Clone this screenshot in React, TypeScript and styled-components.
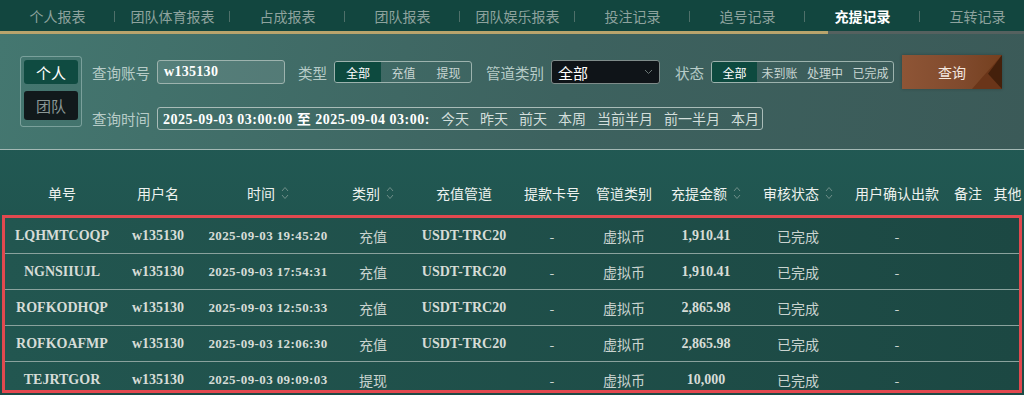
import React from 'react';
import styled, { createGlobalStyle } from 'styled-components';

const GlobalStyle = createGlobalStyle`
  html, body {
    margin: 0;
    padding: 0;
    background: #1f4f4a;
  }
  * {
    box-sizing: border-box;
  }
`;

const sans = `'Noto Sans CJK SC', 'Noto Sans', sans-serif`;
const serif = `'Liberation Serif', 'Noto Sans CJK SC', serif`;

const Page = styled.div`
  width: 1024px;
  height: 395px;
  overflow: hidden;
  font-family: ${sans};
  background: linear-gradient(180deg, #24605a 0%, #1d4c47 100%);
`;

const TabBar = styled.div`
  background: #12463f;
`;

const TabList = styled.div`
  display: flex;
  height: 31px;
`;

const Tab = styled.div<{ $active?: boolean }>`
  position: relative;
  flex: 0 0 115px;
  display: flex;
  align-items: center;
  justify-content: center;
  font-size: 14px;
  color: ${(p) => (p.$active ? '#ffffff' : '#8ea39e')};
  font-weight: ${(p) => (p.$active ? 700 : 400)};
  &:not(:last-child)::after {
    content: '';
    position: absolute;
    right: 0;
    top: 11px;
    width: 1px;
    height: 11px;
    background: #4f706a;
  }
`;

const Track = styled.div`
  height: 3px;
  background: #55615f;
`;

const TrackFill = styled.div`
  width: 828px;
  height: 100%;
  background: #b9a46c;
`;

const Filter = styled.div`
  display: flex;
  align-items: flex-start;
  height: 116px;
  padding: 22px 0 0 20px;
  background: linear-gradient(100deg, #447770 0%, #3d625f 55%, #3b5a58 100%);
  border-bottom: 1px solid #a3b8b4;
`;

const Toggle = styled.div`
  width: 62px;
  height: 71px;
  padding: 3px;
  border: 1px solid rgba(190, 215, 210, 0.45);
  border-radius: 3px;
  display: flex;
  flex-direction: column;
  gap: 7px;
`;

const ToggleBtn = styled.div<{ $active?: boolean }>`
  height: ${(p) => (p.$active ? '24px' : '29px')};
  border-radius: 3px;
  display: flex;
  align-items: center;
  justify-content: center;
  font-size: 15px;
  color: ${(p) => (p.$active ? '#ffffff' : '#8b9896')};
  background: ${(p) => (p.$active ? '#0f4b41' : '#11191b')};
`;

const Form = styled.div`
  margin-left: 10px;
  padding-top: 4px;
  display: flex;
  flex-direction: column;
  gap: 22px;
`;

const FormRow = styled.div`
  display: flex;
  align-items: center;
  height: 24px;
`;

const Label = styled.span<{ $gap?: number }>`
  font-size: 14.5px;
  color: #b7ccc8;
  margin-left: ${(p) => p.$gap ?? 0}px;
  margin-right: 7px;
  white-space: nowrap;
`;

const TextInput = styled.div`
  width: 128px;
  height: 24px;
  border: 1px solid #9db3ae;
  border-radius: 3px;
  background: rgba(255, 255, 255, 0.1);
  padding-left: 6px;
  display: flex;
  align-items: center;
  font-family: ${serif};
  font-weight: 700;
  font-size: 14px;
  letter-spacing: 0.3px;
  color: #ffffff;
`;

const Segments = styled.div`
  display: flex;
  height: 22px;
  border: 1px solid #9db3ae;
  border-radius: 3px;
  overflow: hidden;
`;

const Segment = styled.div<{ $active?: boolean; $w: number }>`
  width: ${(p) => p.$w}px;
  display: flex;
  align-items: center;
  justify-content: center;
  font-size: 12px;
  color: ${(p) => (p.$active ? '#ffffff' : '#c9d6d3')};
  background: ${(p) => (p.$active ? '#0d4a3f' : 'transparent')};
`;

const Select = styled.div`
  width: 109px;
  height: 24px;
  border: 1px solid #7f8c8a;
  border-radius: 3px;
  background: #0f1418;
  display: flex;
  align-items: center;
  justify-content: space-between;
  padding: 0 6px;
  font-size: 15px;
  color: #ffffff;
`;

const QueryButton = styled.div`
  position: relative;
  width: 100px;
  height: 34px;
  margin-left: 8px;
  display: flex;
  align-items: center;
  justify-content: center;
  font-size: 14px;
  color: #f4e8e0;
  overflow: hidden;
  background: linear-gradient(90deg, #8e5536 0%, #804a2d 60%, #75401f 100%);
  box-shadow: 0 0 3px rgba(0, 0, 0, 0.25);
  &::before {
    content: '';
    position: absolute;
    inset: 0;
    background: #6a3519;
    clip-path: polygon(100% 0, 100% 100%, 70% 100%);
  }
  &::after {
    content: '';
    position: absolute;
    inset: 0;
    background: #44200b;
    clip-path: polygon(100% 0, 100% 100%, 86% 55%);
  }
  span {
    position: relative;
    z-index: 1;
  }
`;

const RangeBox = styled.div`
  width: 606px;
  height: 23px;
  border: 1px solid #a9bcb8;
  border-radius: 3px;
  display: flex;
  align-items: center;
`;

const RangeInput = styled.input`
  width: 272px;
  height: 21px;
  padding: 0 0 0 5px;
  margin: 0;
  border: none;
  outline: none;
  background: transparent;
  font-family: ${serif};
  font-weight: 700;
  font-size: 14px;
  letter-spacing: 0.5px;
  color: #ffffff;
`;

const Shortcuts = styled.div`
  display: flex;
  gap: 11px;
  margin-left: 11px;
`;

const Shortcut = styled.span`
  font-size: 14px;
  color: #d3dedb;
  white-space: nowrap;
`;

const cols = '114px 78px 142px 68px 114px 62px 82px 82px 102px 96px 46px 1fr';

const HeadRow = styled.div`
  display: grid;
  grid-template-columns: ${cols};
  height: 65px;
  padding: 0 0 12px 5px;
  align-items: end;
`;

const HeadCell = styled.div`
  display: flex;
  align-items: center;
  justify-content: center;
  gap: 6px;
  font-size: 14px;
  color: #eef2ef;
  white-space: nowrap;
`;

const Body = styled.div`
  margin: 0 2px;
  height: 178px;
  border: 3px solid #e2494f;
  overflow: hidden;
  background: #1e4c47;
`;

const Row = styled.div`
  display: grid;
  grid-template-columns: ${cols};
  height: 36px;
  align-items: center;
  border-bottom: 1px solid #8aa29d;
  background: linear-gradient(90deg, #225650 0%, #1c4843 100%);
`;

const Cell = styled.div<{ $serif?: boolean; $date?: boolean }>`
  text-align: center;
  white-space: nowrap;
  font-family: ${(p) => (p.$serif ? serif : sans)};
  font-weight: ${(p) => (p.$serif ? 700 : 400)};
  font-size: ${(p) => (p.$date ? 13 : 14)}px;
  letter-spacing: ${(p) => (p.$date ? '0.4px' : '0')};
  color: ${(p) => (p.$serif ? '#d6dcd7' : '#cad4d0')};
`;

const SortIcon = () => (
  <svg width="8" height="14" viewBox="0 0 8 14" fill="none">
    <path d="M1 5 L4 1.5 L7 5" stroke="#6f8f89" strokeWidth="1" />
    <path d="M1 9 L4 12.5 L7 9" stroke="#6f8f89" strokeWidth="1" />
  </svg>
);

const Chevron = () => (
  <svg width="9" height="6" viewBox="0 0 9 6" fill="none">
    <path d="M1 1 L4.5 4.5 L8 1" stroke="#6b7674" strokeWidth="1" />
  </svg>
);

const tabs = ['个人报表', '团队体育报表', '占成报表', '团队报表', '团队娱乐报表', '投注记录', '追号记录', '充提记录', '互转记录'];

const headers: { label: string; sort?: boolean }[] = [
  { label: '单号' },
  { label: '用户名' },
  { label: '时间', sort: true },
  { label: '类别', sort: true },
  { label: '充值管道' },
  { label: '提款卡号' },
  { label: '管道类别' },
  { label: '充提金额', sort: true },
  { label: '审核状态', sort: true },
  { label: '用户确认出款' },
  { label: '备注' },
  { label: '其他' },
];

const records = [
  { id: 'LQHMTCOQP', time: '2025-09-03 19:45:20', type: '充值', channel: 'USDT-TRC20', amount: '1,910.41' },
  { id: 'NGNSIIUJL', time: '2025-09-03 17:54:31', type: '充值', channel: 'USDT-TRC20', amount: '1,910.41' },
  { id: 'ROFKODHQP', time: '2025-09-03 12:50:33', type: '充值', channel: 'USDT-TRC20', amount: '2,865.98' },
  { id: 'ROFKOAFMP', time: '2025-09-03 12:06:30', type: '充值', channel: 'USDT-TRC20', amount: '2,865.98' },
  { id: 'TEJRTGOR', time: '2025-09-03 09:09:03', type: '提现', channel: '', amount: '10,000' },
];

export default function App() {
  return (
    <Page>
      <GlobalStyle />
      <TabBar>
        <TabList>
          {tabs.map((t) => (
            <Tab key={t} $active={t === '充提记录'}>{t}</Tab>
          ))}
        </TabList>
        <Track>
          <TrackFill />
        </Track>
      </TabBar>

      <Filter>
        <Toggle>
          <ToggleBtn $active>个人</ToggleBtn>
          <ToggleBtn>团队</ToggleBtn>
        </Toggle>
        <Form>
          <FormRow>
            <Label>查询账号</Label>
            <TextInput>w135130</TextInput>
            <Label $gap={13}>类型</Label>
            <Segments>
              <Segment $w={46} $active>全部</Segment>
              <Segment $w={45}>充值</Segment>
              <Segment $w={45}>提现</Segment>
            </Segments>
            <Label $gap={14}>管道类别</Label>
            <Select>
              <span>全部</span>
              <Chevron />
            </Select>
            <Label $gap={15}>状态</Label>
            <Segments>
              <Segment $w={45} $active>全部</Segment>
              <Segment $w={45}>未到账</Segment>
              <Segment $w={46}>处理中</Segment>
              <Segment $w={45}>已完成</Segment>
            </Segments>
            <QueryButton>
              <span>查询</span>
            </QueryButton>
          </FormRow>
          <FormRow>
            <Label>查询时间</Label>
            <RangeBox>
              <RangeInput readOnly value="2025-09-03 03:00:00 至 2025-09-04 03:00:00" />
              <Shortcuts>
                {['今天', '昨天', '前天', '本周', '当前半月', '前一半月', '本月'].map((s) => (
                  <Shortcut key={s}>{s}</Shortcut>
                ))}
              </Shortcuts>
            </RangeBox>
          </FormRow>
        </Form>
      </Filter>

      <HeadRow>
        {headers.map((h) => (
          <HeadCell key={h.label}>
            {h.label}
            {h.sort && <SortIcon />}
          </HeadCell>
        ))}
      </HeadRow>

      <Body>
        {records.map((r) => (
          <Row key={r.id}>
            <Cell $serif>{r.id}</Cell>
            <Cell $serif>w135130</Cell>
            <Cell $serif $date>{r.time}</Cell>
            <Cell>{r.type}</Cell>
            <Cell $serif>{r.channel}</Cell>
            <Cell>-</Cell>
            <Cell>虚拟币</Cell>
            <Cell $serif>{r.amount}</Cell>
            <Cell>已完成</Cell>
            <Cell>-</Cell>
            <Cell />
            <Cell />
          </Row>
        ))}
      </Body>
    </Page>
  );
}
